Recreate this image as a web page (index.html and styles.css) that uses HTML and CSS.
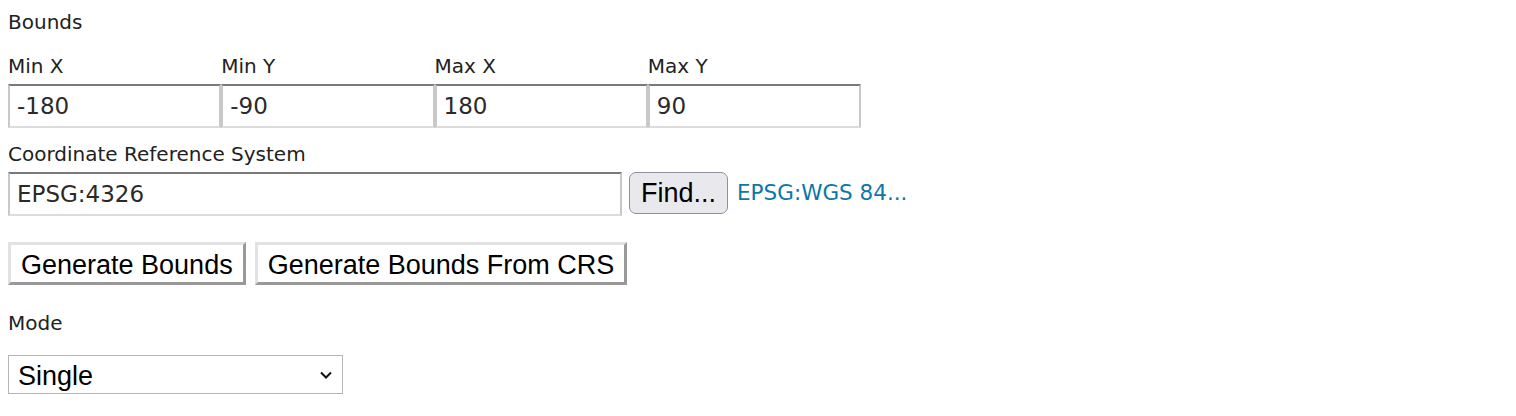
FILE: index.html
```html
<!DOCTYPE html>
<html>
<head>
<meta charset="utf-8">
<link rel="stylesheet" href="styles.css">
</head>
<body>
<div class="form">
  <div class="section-title">Bounds</div>
  <div class="bounds-row">
    <div class="field">
      <label class="label">Min X</label>
      <input class="text-input" type="text" value="-180">
    </div>
    <div class="field">
      <label class="label">Min Y</label>
      <input class="text-input" type="text" value="-90">
    </div>
    <div class="field">
      <label class="label">Max X</label>
      <input class="text-input" type="text" value="180">
    </div>
    <div class="field">
      <label class="label">Max Y</label>
      <input class="text-input" type="text" value="90">
    </div>
  </div>
  <label class="label crs-label">Coordinate Reference System</label>
  <div class="crs-row">
    <input class="text-input crs-input" type="text" value="EPSG:4326">
    <button class="find-btn">Find...</button>
    <a class="crs-link">EPSG:WGS 84...</a>
  </div>
  <div class="btn-row">
    <button class="gen-btn">Generate Bounds</button>
    <button class="gen-btn">Generate Bounds From CRS</button>
  </div>
  <label class="label mode-label">Mode</label>
  <div class="select-wrap">
    <span class="select-value">Single</span>
    <svg class="chevron" width="14" height="10" viewBox="0 0 14 10"><path d="M2 2.5 L7 7.5 L12 2.5" fill="none" stroke="#111" stroke-width="2"/></svg>
  </div>
</div>
</body>
</html>
```
FILE: styles.css
```css
body {
  margin: 8px;
  background: #fff;
  font-family: "DejaVu Sans", Verdana, sans-serif;
  color: #222;
}
.form {
  display: flex;
  flex-direction: column;
  align-items: flex-start;
}
.section-title {
  font-size: 20px;
  line-height: 28px;
  margin-top: 0;
}
.label {
  display: block;
  font-size: 20px;
  line-height: 28px;
  color: #222;
}
.bounds-row {
  display: flex;
  margin-top: 16px;
}
.field {
  display: flex;
  flex-direction: column;
  width: 213.25px;
}
.field .label {
  height: 32px;
}
.text-input {
  box-sizing: border-box;
  height: 44px;
  width: 213.25px;
  border-style: solid;
  border-width: 2px;
  border-color: #7a7a7a #c8c8c8 #dcdcdc #c8c8c8;
  padding: 0 7px;
  font-family: "DejaVu Sans", Verdana, sans-serif;
  font-size: 23px;
  color: #2a2a2a;
  outline: none;
  margin: 0;
}
.crs-label {
  margin-top: 12px;
  height: 32px;
}
.crs-row {
  display: flex;
  align-items: flex-start;
}
.crs-input {
  width: 614px;
}
.find-btn {
  box-sizing: border-box;
  margin-left: 7px;
  height: 42px;
  padding: 1px 11px 0;
  background: #e9e9ed;
  border: 1.5px solid #8f8f9d;
  border-radius: 7px;
  font-family: "Liberation Sans", Arial, sans-serif;
  font-size: 27px;
  color: #000;
}
.crs-link {
  margin-left: 9px;
  font-size: 21.5px;
  line-height: 42px;
  color: #0f77a5;
}
.btn-row {
  display: flex;
  gap: 9px;
  margin-top: 26px;
}
.gen-btn {
  box-sizing: border-box;
  height: 43px;
  padding: 3px 10px 0;
  background: #fff;
  border-style: solid;
  border-width: 3px;
  border-color: #e2e2e2 #999 #999 #e2e2e2;
  font-family: "Liberation Sans", Arial, sans-serif;
  font-size: 27px;
  color: #000;
  margin: 0;
}
.mode-label {
  margin-top: 24px;
}
.select-wrap {
  box-sizing: border-box;
  margin-top: 18px;
  width: 335px;
  height: 39px;
  border: 1.5px solid #b5b5b5;
  display: flex;
  align-items: center;
  justify-content: space-between;
  padding: 3px 9px 0;
}
.select-value {
  font-family: "Liberation Sans", Arial, sans-serif;
  font-size: 27px;
  color: #000;
}
.chevron {
  display: block;
  margin-top: -3px;
}
```
